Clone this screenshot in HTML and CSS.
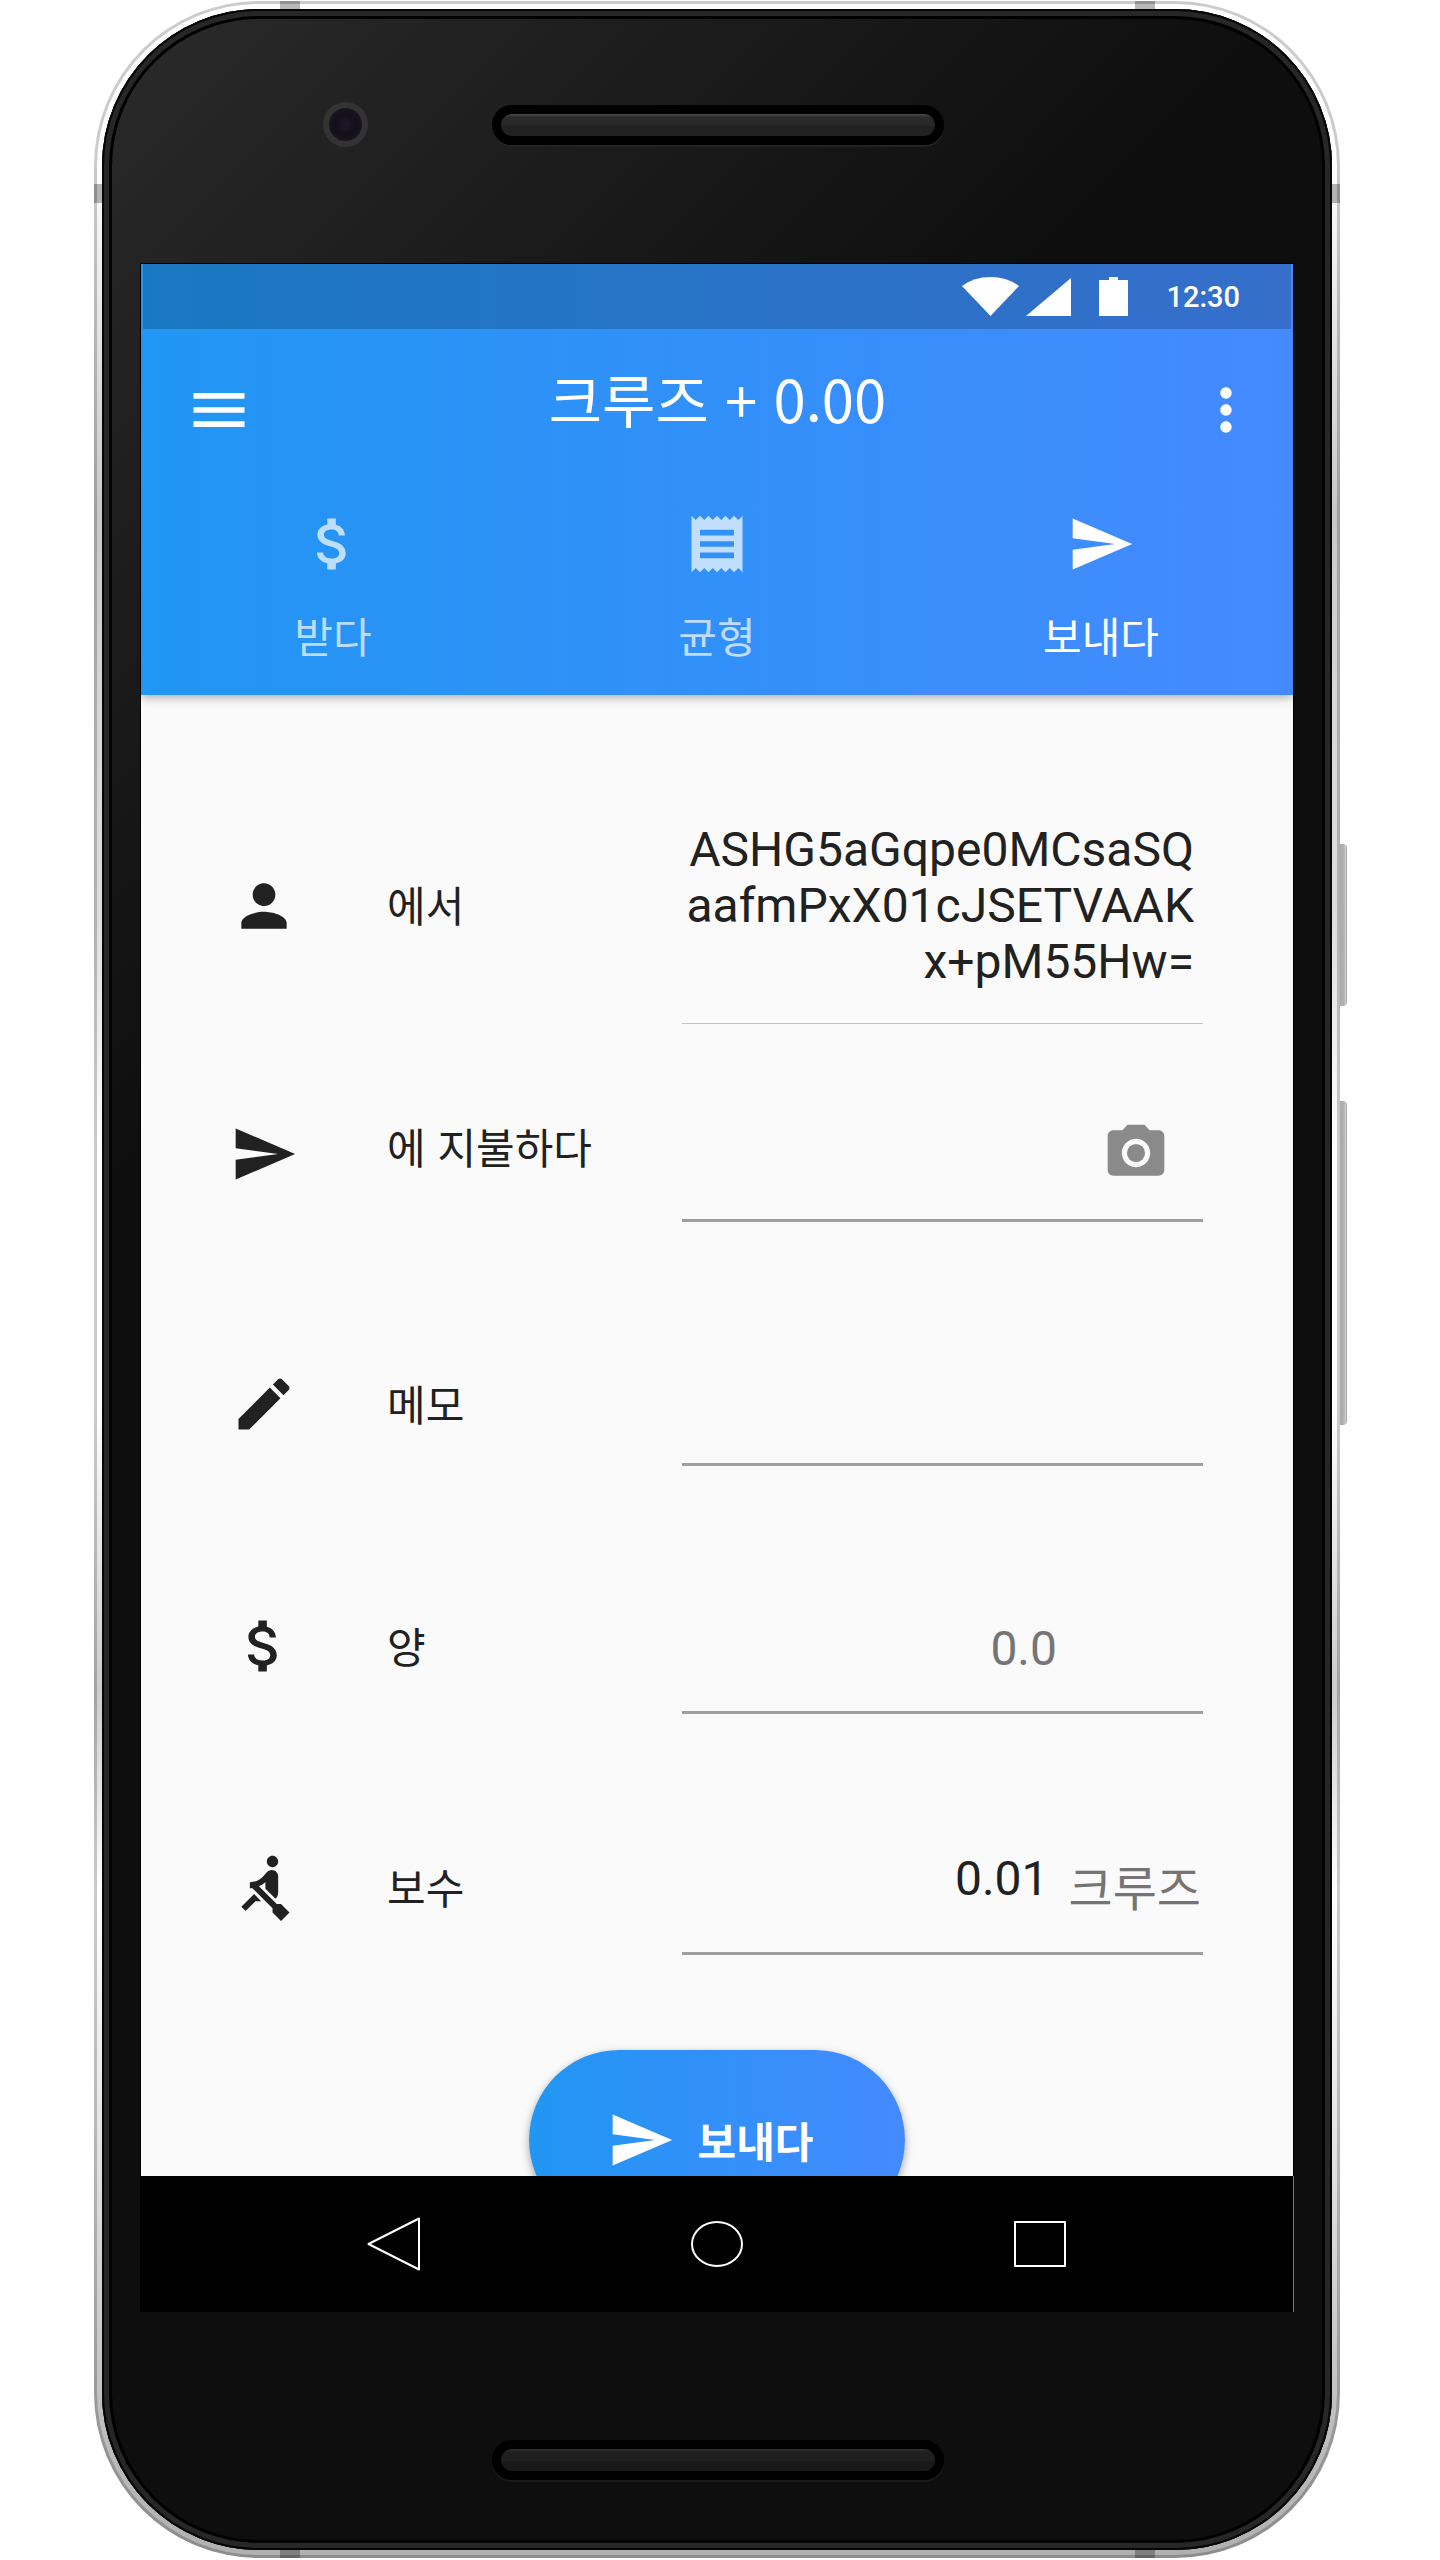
FILE: index.html
```html
<!DOCTYPE html>
<html lang="ko">
<head>
<meta charset="utf-8">
<meta name="viewport" content="width=device-width, initial-scale=1">
<title>크루즈 지갑</title>
<link rel="stylesheet" href="styles.css">
</head>
<body>
<svg class="sprite" aria-hidden="true">
  <symbol id="i-menu" viewBox="0 0 24 24"><path d="M3 18h18v-2H3v2zm0-5h18v-2H3v2zm0-7v2h18V6H3z"/></symbol>
  <symbol id="i-more" viewBox="0 0 24 24"><path d="M12 8c1.1 0 2-.9 2-2s-.9-2-2-2-2 .9-2 2 .9 2 2 2zm0 2c-1.1 0-2 .9-2 2s.9 2 2 2 2-.9 2-2-.9-2-2-2zm0 6c-1.1 0-2 .9-2 2s.9 2 2 2 2-.9 2-2-.9-2-2-2z"/></symbol>
  <symbol id="i-money" viewBox="0 0 24 24"><path d="M11.8 10.9c-2.27-.59-3-1.2-3-2.15 0-1.09 1.01-1.85 2.7-1.85 1.78 0 2.44.85 2.5 2.1h2.21c-.07-1.72-1.12-3.3-3.21-3.81V3h-3v2.16c-1.94.42-3.5 1.68-3.5 3.61 0 2.31 1.91 3.46 4.7 4.13 2.5.6 3 1.48 3 2.41 0 .69-.49 1.79-2.7 1.79-2.06 0-2.87-.92-2.98-2.1h-2.2c.12 2.19 1.76 3.42 3.68 3.83V21h3v-2.15c1.95-.37 3.5-1.5 3.5-3.55 0-2.84-2.43-3.81-4.7-4.4z"/></symbol>
  <symbol id="i-receipt" viewBox="0 0 24 24"><path d="M18 17H6v-2h12v2zm0-4H6v-2h12v2zm0-4H6V7h12v2zM3 22l1.5-1.5L6 22l1.5-1.5L9 22l1.5-1.5L12 22l1.5-1.5L15 22l1.5-1.5L18 22l1.5-1.5L21 22V2l-1.5 1.5L18 2l-1.5 1.5L15 2l-1.5 1.5L12 2l-1.5 1.5L9 2 7.5 3.5 6 2 4.5 3.5 3 2v20z"/></symbol>
  <symbol id="i-send" viewBox="0 0 24 24"><path d="M2.01 21L23 12 2.01 3 2 10l15 2-15 2z"/></symbol>
  <symbol id="i-person" viewBox="0 0 24 24"><path d="M12 12c2.21 0 4-1.79 4-4s-1.79-4-4-4-4 1.79-4 4 1.79 4 4 4zm0 2c-2.67 0-8 1.34-8 4v2h16v-2c0-2.66-5.33-4-8-4z"/></symbol>
  <symbol id="i-edit" viewBox="0 0 24 24"><path d="M3 17.25V21h3.75L17.81 9.94l-3.75-3.75L3 17.25zM20.71 7.04c.39-.39.39-1.02 0-1.41l-2.34-2.34c-.39-.39-1.02-.39-1.41 0l-1.83 1.83 3.75 3.75 1.83-1.83z"/></symbol>
  <symbol id="i-rowing" viewBox="0 0 24 24"><path d="M8.5 14.5L4 19l1.5 1.5L9 17h2l-2.5-2.5zM15 1c-1.1 0-2 .9-2 2s.9 2 2 2 2-.9 2-2-.9-2-2-2zm6 20.01L18 24l-2.99-3.01V19.5l-7.1-7.09c-.31.05-.61.07-.91.07v-2.16c1.66.03 3.61-.87 4.67-2.04l1.4-1.55c.19-.21.43-.38.69-.5.29-.14.62-.23.96-.23h.03C15.99 6.01 17 7.02 17 8.26v5.75c0 .84-.35 1.61-.92 2.16l-3.58-3.58v-2.27c-.63.52-1.43 1.02-2.29 1.39L16.5 18H18l3 3.01z"/></symbol>
  <symbol id="i-camera" viewBox="0 0 24 24"><circle cx="12" cy="12" r="3.2"/><path d="M9 2L7.17 4H4c-1.1 0-2 .9-2 2v12c0 1.1.9 2 2 2h16c1.1 0 2-.9 2-2V6c0-1.1-.9-2-2-2h-3.17L15 2H9zm3 15c-2.76 0-5-2.24-5-5s2.24-5 5-5 5 2.24 5 5-2.24 5-5 5z"/></symbol>
</svg>

<div class="phone">
  <i class="seam seam-top seam-start"></i><i class="seam seam-top seam-end"></i>
  <i class="seam seam-left"></i><i class="seam seam-right"></i>
  <i class="seam seam-bottom seam-start"></i><i class="seam seam-bottom seam-end"></i>
  <i class="side-key key-power"></i><i class="side-key key-volume"></i>

  <div class="bezel">
    <div class="forehead">
      <span class="lens"></span>
      <span class="speaker"></span>
    </div>

    <main class="screen">
      <header class="top">
        <div class="status">
          <svg class="wifi" viewBox="0 0 57 39" aria-hidden="true"><path d="M0 9Q12 0 28.500 0T57 9L28.500 39z"/></svg>
          <svg class="signal" viewBox="0 0 45 38" aria-hidden="true"><path d="M45 0v38H0z"/></svg>
          <svg class="battery" viewBox="0 0 29 39" aria-hidden="true"><path d="M0 3h10V0h9v3h10v36H0z"/></svg>
          <time class="clock">12:30</time>
        </div>
        <div class="app-bar">
          <button class="icon-button" type="button" aria-label="메뉴"><svg class="icon"><use href="#i-menu"/></svg></button>
          <h1 class="title">크루즈 + 0.00</h1>
          <button class="icon-button more" type="button" aria-label="더보기"><svg class="icon"><use href="#i-more"/></svg></button>
        </div>
        <nav class="tabs">
          <a class="tab" href="#receive"><svg class="icon"><use href="#i-money"/></svg><span>받다</span></a>
          <a class="tab" href="#balance"><svg class="icon"><use href="#i-receipt"/></svg><span>균형</span></a>
          <a class="tab tab-active" href="#send" aria-current="page"><svg class="icon"><use href="#i-send"/></svg><span>보내다</span></a>
        </nav>
      </header>

      <form class="form" id="send">
        <div class="row row-from">
          <svg class="icon"><use href="#i-person"/></svg>
          <label for="from">에서</label>
          <div class="field"><textarea id="from" rows="3" readonly>ASHG5aGqpe0MCsaSQ
aafmPxX01cJSETVAAK
x+pM55Hw=</textarea></div>
        </div>
        <div class="row row-to">
          <svg class="icon"><use href="#i-send"/></svg>
          <label for="to">에 지불하다</label>
          <div class="field"><input id="to" type="text"><button class="icon-button scan" type="button" aria-label="스캔"><svg class="icon"><use href="#i-camera"/></svg></button></div>
        </div>
        <div class="row row-memo">
          <svg class="icon"><use href="#i-edit"/></svg>
          <label for="memo">메모</label>
          <div class="field"><input id="memo" type="text"></div>
        </div>
        <div class="row row-amount">
          <svg class="icon"><use href="#i-money"/></svg>
          <label for="amount">양</label>
          <div class="field"><input id="amount" type="text" inputmode="decimal" placeholder="0.0"></div>
        </div>
        <div class="row row-fee">
          <svg class="icon"><use href="#i-rowing"/></svg>
          <label for="fee">보수</label>
          <div class="field"><input id="fee" type="text" inputmode="decimal" value="0.01"><span class="unit">크루즈</span></div>
        </div>
        <div class="actions">
          <button class="send" type="submit"><svg class="icon"><use href="#i-send"/></svg><span>보내다</span></button>
        </div>
      </form>
    </main>

    <nav class="system-nav">
      <button type="button" aria-label="뒤로"><svg viewBox="0 0 54 54"><path d="M52 1.500v51L1.500 27z"/></svg></button>
      <button type="button" aria-label="홈"><svg viewBox="0 0 54 54"><ellipse cx="27" cy="27" rx="25" ry="22"/></svg></button>
      <button type="button" aria-label="최근 앱"><svg viewBox="0 0 54 54"><rect x="2" y="5" width="50" height="44"/></svg></button>
    </nav>

    <div class="chin"><span class="speaker speaker-dim"></span></div>
  </div>
</div>
</body>
</html>
```
FILE: styles.css
```css
* { box-sizing: border-box; }

body {
  margin: 0;
  padding: 1px 100px 1px 94px;
  background: #fff;
  color: #212121;
  font-family: "Noto Sans CJK KR", "Noto Sans", sans-serif;
}

button, input, textarea {
  margin: 0;
  padding: 0;
  border: 0;
  outline: 0;
  background: none;
  color: inherit;
  font: inherit;
}

.sprite { position: absolute; width: 0; height: 0; }

.icon { display: block; flex: none; width: 68px; height: 68px; fill: currentColor; }

/* Handset */
.phone {
  position: relative;
  padding: 8px;
  border-radius: 165px;
  background: linear-gradient(#fff 0, #fff 6%, #c8c8c8 20%, #d8d8d8 28%, #dedede 36%, #fff 45%, #fff 55%, #ccc 66%, #fff 74%, #e0e0e0 85%, #bdbdbd 95%, #b0b0b0 100%);
  box-shadow: inset 0 0 0 3px rgba(0, 0, 0, .2);
}

.bezel {
  padding: 0 39px;
  border-radius: 157px;
  background: linear-gradient(135deg, #2b2b2b 0, #161616 600px, #0e0e0e 850px);
  box-shadow: inset 0 0 0 2px #060606, inset 0 0 0 7px #272727, inset 0 0 0 10px #000;
}

.seam { position: absolute; background: rgba(0, 0, 0, .28); }
.seam-top, .seam-bottom { width: 20px; height: 8px; }
.seam-top { top: 0; }
.seam-bottom { bottom: 0; }
.seam-start { left: 186px; }
.seam-end { right: 185px; }
.seam-left, .seam-right { top: 183px; width: 8px; height: 19px; }
.seam-left { left: 0; }
.seam-right { right: 0; }

.side-key {
  position: absolute;
  left: 100%;
  width: 7px;
  border-radius: 0 4px 4px 0;
  background: linear-gradient(90deg, #a8a8a8, #b4b4b4 60%, #d0d0d0 80%, #999);
}
.key-power { top: 843px; height: 162px; }
.key-volume { top: 1100px; height: 324px; }

.forehead { position: relative; height: 255px; padding: 96px 0 0 2px; }

.lens {
  position: absolute;
  top: 93px;
  left: 182px;
  width: 45px;
  height: 45px;
  border: 6px solid #333;
  border-radius: 50%;
  background: radial-gradient(circle, #1d1628 10%, #131019 45%, #1f1b25 100%);
}

.speaker {
  display: block;
  width: 452px;
  height: 40px;
  margin: 0 auto;
  border: 9px solid #000;
  border-radius: 20px;
  background: linear-gradient(#4a4a4a 0, #2b2b2b 15%, #272727 55%, #212121 56%, #212121 100%);
  box-shadow: 0 2px 0 #242424;
}
.speaker-dim {
  background: linear-gradient(#303030 0, #202020 15%, #1d1d1d 55%, #191919 56%);
  box-shadow: 0 2px 0 #1a1a1a;
}

.chin { height: 238px; padding: 128px 0 0 2px; }

/* App screen */
.screen {
  overflow: hidden;
  background: #fafafa;
  box-shadow: 0 0 0 1px #000;
}

.top {
  position: relative;
  background: linear-gradient(90deg, #2196f3, #448aff);
  box-shadow: 0 2px 10px rgba(0, 0, 0, .35);
  color: #fff;
}

.status {
  display: flex;
  align-items: center;
  justify-content: flex-end;
  height: 65px;
  margin: 0 2px;
  padding-right: 51px;
  background: rgba(0, 0, 0, .2);
}
.status svg { fill: #fff; }
.wifi { width: 57px; height: 39px; }
.signal { width: 45px; height: 38px; margin-left: 7px; }
.battery { width: 29px; height: 39px; margin-left: 28px; }
.clock { margin-left: 38px; font: 500 29px/40px Roboto, sans-serif; }

.app-bar {
  display: grid;
  grid-template-columns: 68px 1fr 78px;
  align-items: center;
  height: 162px;
  padding: 0 33px 0 44px;
}
.icon-button { display: block; cursor: pointer; }
.more { justify-self: end; }
.title {
  margin: 0;
  padding-bottom: 24px;
  font-size: 58px;
  font-weight: 400;
  line-height: 80px;
  text-align: center;
}

.tabs { display: grid; grid-template-columns: repeat(3, 1fr); }
.tab {
  display: flex;
  flex-direction: column;
  align-items: center;
  gap: 27px;
  height: 204px;
  padding-top: 19px;
  border-bottom: 6px solid transparent;
  color: rgba(255, 255, 255, .7);
  font-size: 42px;
  line-height: 60px;
  text-decoration: none;
}
.tab-active { border-color: #448aff; color: #fff; }

/* Payment form */
.form { padding: 92px 90px 0 89px; }

.row {
  display: grid;
  grid-template-columns: 68px minmax(0, 384fr) minmax(0, 521fr);
  align-items: center;
  min-height: 136px;
}
.row label { padding: 0 0 3px 89px; font-size: 42px; line-height: 60px; white-space: nowrap; }

.field {
  display: flex;
  align-self: stretch;
  align-items: center;
  border-bottom: 3px solid #9e9e9e;
  font-family: Roboto, "Noto Sans CJK KR", sans-serif;
  font-size: 48px;
  line-height: 56px;
}
.field input, .field textarea { flex: 1; min-width: 0; text-align: right; }
.field textarea { display: block; height: 168px; overflow: hidden; resize: none; white-space: pre; }

.row-from .field { padding: 35px 9px 33px 0; border-bottom: 1px solid #c4c4c4; }
.row-to { margin-top: 62px; }
.row-to label { padding-bottom: 16px; }
.scan { margin-right: 33px; color: #8a8a8a; }
.row-memo { min-height: 124px; margin-top: 120px; }
.row-amount { margin-top: 112px; }
.row-amount .field { padding: 8px 146px 0 0; }
.row-amount input::placeholder { color: #757575; opacity: 1; }
.row-fee { margin-top: 105px; }
.row-fee .field { padding-right: 2px; }
.row-fee input { padding-bottom: 14px; }
.unit { margin-left: 20px; padding-top: 8px; color: #757575; }

.actions { height: 221px; padding-top: 95px; }
.send {
  display: flex;
  align-items: center;
  gap: 23px;
  width: 376px;
  height: 180px;
  margin: 0 auto;
  padding-left: 78px;
  border-radius: 90px;
  background: linear-gradient(90deg, #2196f3, #448aff);
  box-shadow: 0 3px 8px rgba(0, 0, 0, .35);
  color: #fff;
  font-size: 42px;
  font-weight: 700;
  line-height: 60px;
}

/* Android navigation keys */
.system-nav {
  display: grid;
  grid-template-columns: repeat(3, 323px);
  justify-content: center;
  margin: 0 -1px;
  height: 136px;
  border-right: 1px solid #777;
  background: #000;
}
.system-nav button { display: flex; align-items: center; justify-content: center; }
.system-nav svg { width: 54px; height: 54px; fill: none; stroke: #fff; stroke-width: 2; stroke-linejoin: round; }
```
